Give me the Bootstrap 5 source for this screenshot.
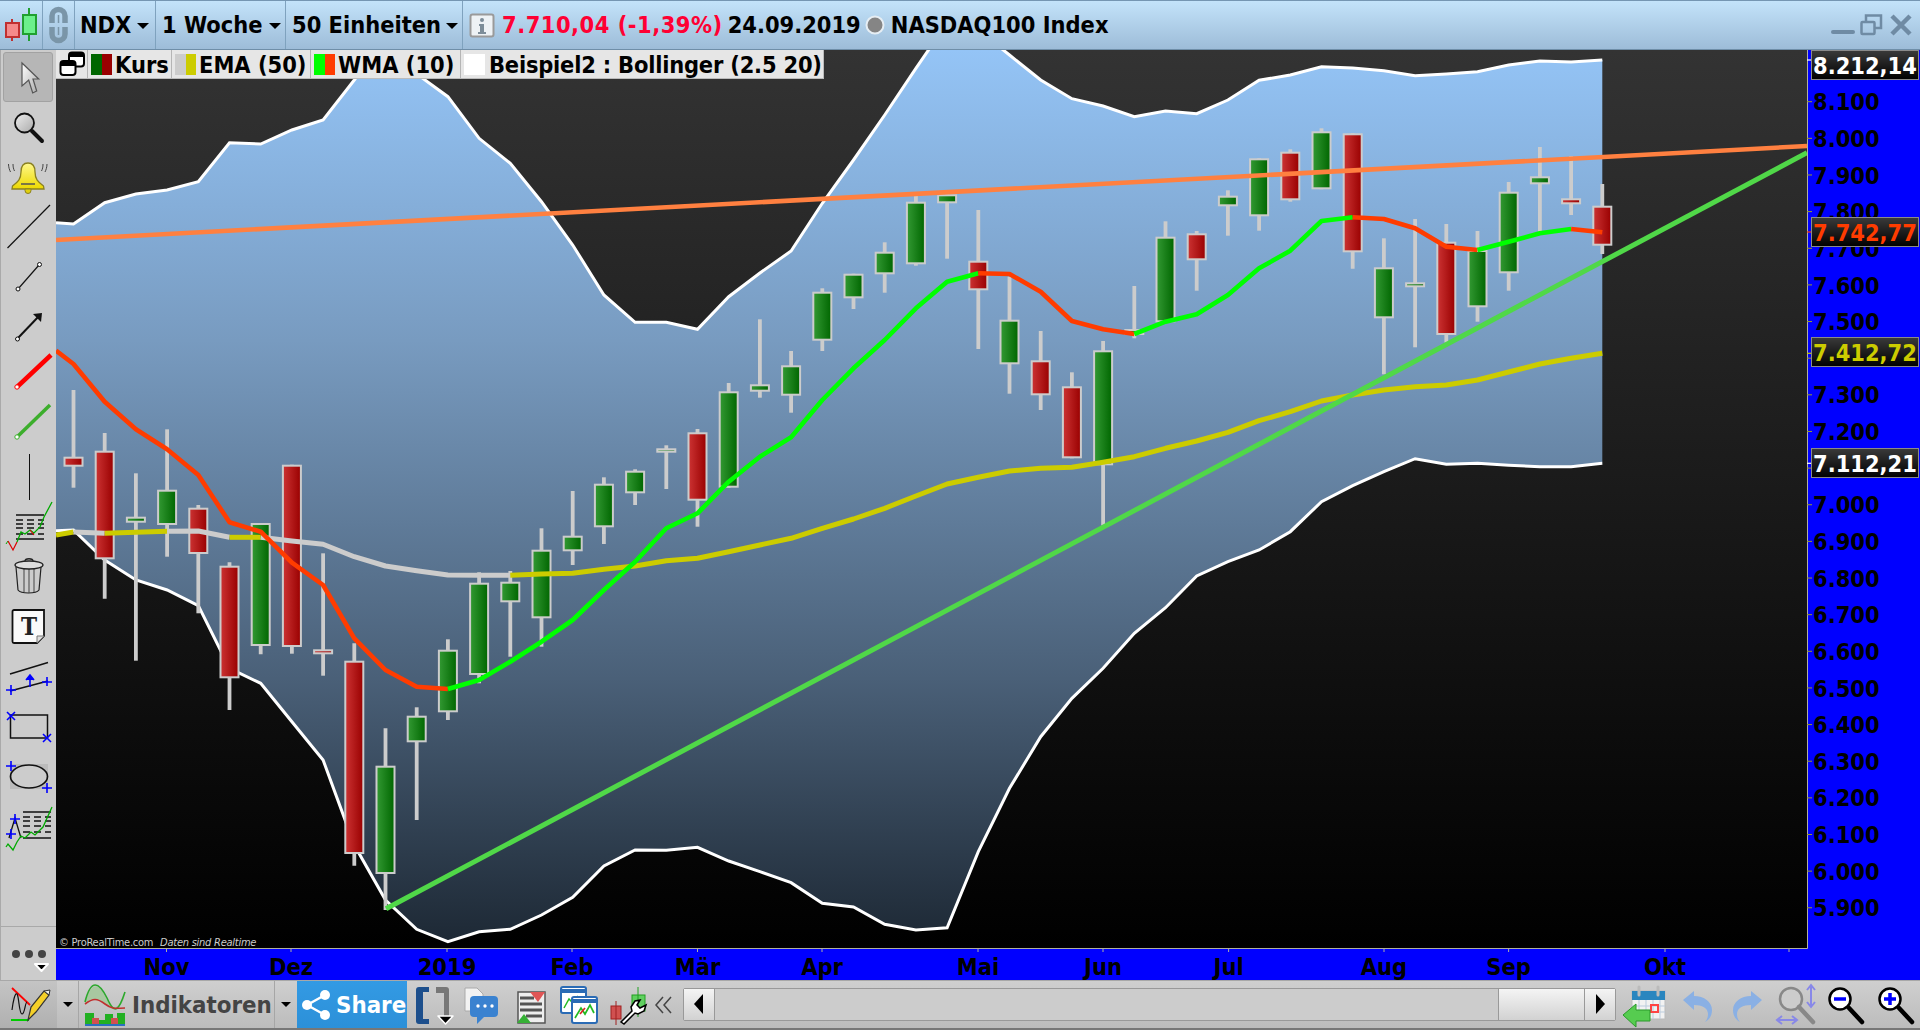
<!DOCTYPE html>
<html lang="de">
<head>
<meta charset="utf-8">
<title>NDX</title>
<link href="https://cdn.jsdelivr.net/npm/bootstrap@5.3.0/dist/css/bootstrap.min.css" rel="stylesheet">
<style>
html,body{height:100%;margin:0;overflow:hidden;background:#ccc}
body{font-family:"DejaVu Sans Condensed","DejaVu Sans",sans-serif;font-stretch:condensed;font-weight:700;font-size:23.4px;line-height:1;color:#000}
svg{display:block;overflow:visible}
.shell{width:1920px;height:1030px}
.topbar{height:50px;flex:none;background:linear-gradient(#c3e3fa,#9dbcd8);border-top:1px solid #7596b2;border-bottom:1px solid #6f8ea8}
.seg{height:100%;border-right:1px solid #7fa2be}
.seg.dropdown-toggle::after{border-top:.27em solid;border-right:.27em solid transparent;border-left:.27em solid transparent;border-bottom:0;margin-left:0}
.s-logo{width:43px}.s-chain{width:32px}
.s-ndx{width:81px;padding:2px 6px 0 5px}.s-wk{width:130px;padding:2px 4px 0 6px}.s-un{width:177px;padding:2px 4px 0 6px}
.quote{margin-left:6px}
.quote span{padding-top:2px}
.pricetxt{color:#f03;margin-left:7px;letter-spacing:.5px}
.datetxt{margin-left:5px}
.namefx{margin-left:6px}
.winbtns{margin-right:8px}
.middle{min-height:0}
.toolcol{width:56px;flex:none;background:#ccc;border-left:1px solid #aaa;padding-top:2px}
.tool{height:50px;width:55px;flex:none}
.tool.on{background:#b6b6b6;border:1px solid #a2a2a2;border-radius:3px;width:50px;margin-left:2px}
.morebox{margin-top:auto;height:54px;border-top:1px solid #a9a9a9}
.stage{min-width:0}
.legendbar{position:absolute;left:0;top:0;width:768px;height:29px;background:#e6e6e6;border-bottom:1px solid #bbb;border-right:1px solid #bbb}
.legcell{height:100%;padding:0 0 0 3px;border-right:1px solid #b5b5b5;gap:3px;flex:none}
.legcell:last-child{border-right:0;flex:1 1 auto}
.legtxt{padding-top:4px}
.l1{width:32px}.l2{width:84px}.l3{width:139px}.l4{width:150px}
.tight{letter-spacing:-.2px}
.swatch{width:21px;height:21px;flex:none;display:flex}
.swatch i{flex:1}
.bottombar{height:50px;flex:none;background:linear-gradient(#cfcfcf,#bcbcbc);border-top:1px solid #a8a8a8;border-bottom:2px solid #777;font-size:23.8px}
.pen{width:57px;background:linear-gradient(#c4c4c4,#b0b0b0);height:100%;flex:none}
.capbox{height:100%;flex:none;border-right:1px solid #a6a6a6}
.capbox.dropdown-toggle::after{border-top:.25em solid;border-right:.25em solid transparent;border-left:.25em solid transparent;border-bottom:0;margin:0}
.c1{width:22px}.c2{width:22px}
.indi{width:196px;height:100%;border-right:1px solid #a6a6a6;color:#444;padding-left:6px;gap:5px;flex:none}
.indi span,.sharebtn span{padding-top:2px}
.sharebtn{width:110px;height:100%;flex:none;background:linear-gradient(#339ae4,#2c90d8);color:#fff;padding-left:5px;gap:6px}
.ico{flex:none}
.track{height:33px;width:933px;flex:none;background:#ccc;border:1px solid #999;border-radius:2px;margin-top:-1px}
.sb{background:linear-gradient(#f4f4f4,#d2d2d2);height:100%;flex:none}
.sb-a{width:31px;border-right:1px solid #999}
.sb-b{width:31px;border-left:1px solid #999}
.sb-t{width:86px;border-left:1px solid #999}
.bleft{margin-left:7px}
.gapico{margin-left:6px}
.copytxt{font-weight:400;font-size:11px;letter-spacing:-.25px}
</style>
</head>
<body>
<div class="shell d-flex flex-column">
  <!-- top bar -->
  <div class="topbar d-flex align-items-center">
    <div class="seg s-logo d-flex align-items-center justify-content-center">
      <svg width="43" height="49" viewBox="0 1 43 49"><path d="M12 19v22" stroke="#c03030" stroke-width="2"/><path d="M29 8v33" stroke="#20a030" stroke-width="2"/><rect x="6" y="23" width="13" height="14" fill="#f58a8a" stroke="#c03030" stroke-width="2"/><rect x="23" y="15" width="13" height="19" fill="#6cf08c" stroke="#20a030" stroke-width="2"/></svg>
    </div>
    <div class="seg s-chain d-flex align-items-center justify-content-center">
      <svg width="32" height="49" viewBox="43 1 32 49"><g fill="none" stroke="#7a95a8"><path d="M52 23v-7a6.500 6.500 0 0 1 13 0v7" stroke-width="5.500"/><path d="M52 27v7a6.500 6.500 0 0 0 13 0v-7" stroke-width="5.500"/><path d="M58.500 15v8M58.500 27v8" stroke-width="1.500"/></g></svg>
    </div>
    <div class="seg s-ndx dropdown-toggle d-flex align-items-center justify-content-between">NDX</div>
    <div class="seg s-wk dropdown-toggle d-flex align-items-center justify-content-between">1 Woche</div>
    <div class="seg s-un dropdown-toggle d-flex align-items-center justify-content-between">50 Einheiten</div>
    <div class="quote d-flex align-items-center flex-grow-1">
      <svg class="ico" width="26" height="25" viewBox="0 0 26 25"><rect x="1.500" y="1.500" width="23" height="22" rx="2" fill="#eef2f5" stroke="#9a9a9a" stroke-width="2"/><circle cx="13" cy="7" r="2" fill="#7d8d99"/><path d="M10 11h5v8h2v2H9v-2h2v-6h-1z" fill="#7d8d99"/></svg>
      <span class="pricetxt">7.710,04 (-1,39%)</span>
      <span class="datetxt">24.09.2019</span>
      <svg class="ico ms-1" width="20" height="20" viewBox="0 0 20 20"><circle cx="10" cy="10" r="8.500" fill="#858585" stroke="#e6eef4" stroke-width="2"/></svg>
      <span class="namefx">NASDAQ100 Index</span>
    </div>
    <div class="winbtns">
      <svg width="80" height="30" viewBox="1832 10 80 30"><path d="M1833 32h20" stroke="#6f8ba4" stroke-width="4" stroke-linecap="round"/><g fill="none" stroke="#6f8ba4" stroke-width="2.500"><rect x="1861.500" y="22" width="13" height="12" rx="1"/><path d="M1866 21v-5.500h15v12.500h-6"/></g><path d="M1892 16l18 18M1910 16l-18 18" stroke="#6f8ba4" stroke-width="4.500"/></svg>
    </div>
  </div>

  <!-- middle -->
  <div class="middle d-flex flex-grow-1">
    <div class="toolcol d-flex flex-column">
      <div class="tool on"><svg width="50" height="48" viewBox="2 1 50 48"><defs><linearGradient id="wg" x1="0" y1="0" x2="1" y2="1"><stop offset="0" stop-color="#fff"/><stop offset="1" stop-color="#aaa"/></linearGradient></defs><path d="M20 11v23l6.700-6 4 13 4-2-3.700-12h5.700z" fill="url(#wg)" stroke="#555" stroke-width="1.200"/></svg></div>
      <div class="tool"><svg width="55" height="50"><defs><linearGradient id="lens" x1="0" y1="0" x2="1" y2="1"><stop offset="0" stop-color="#eee"/><stop offset="1" stop-color="#aaa"/></linearGradient></defs><circle cx="23.500" cy="21" r="9.500" fill="url(#lens)" stroke="#111" stroke-width="1.800"/><path d="M31 29l10 10" stroke="#111" stroke-width="4" stroke-linecap="round"/></svg></div>
      <div class="tool"><svg width="55" height="50"><defs><linearGradient id="bel" x1="0" y1="0" x2="0" y2="1"><stop offset="0" stop-color="#fff88a"/><stop offset="1" stop-color="#ecd800"/></linearGradient></defs><path d="M27 11c-5 0-7 4-7 9 0 7-3 10-8.500 14l-.5 3h32l-.5-3C37 30 34 27 34 20c0-5-2-9-7-9z" fill="url(#bel)" stroke="#8a8020" stroke-width="1.300"/><path d="M20 32h14" stroke="#555" stroke-width="1.500"/><path d="M24 37h6v1.500a3 3 0 0 1-6 0z" fill="#e0d010" stroke="#8a8020"/><path d="M7.500 12c0 3 1 6 2 8M12 12c0 3 .5 5 1.500 7M46 12c0 3-1 6-2 8M42 12c0 3-.5 5-1.500 7" stroke="#444" fill="none"/></svg></div>
      <div class="tool"><svg width="55" height="50"><path d="M6.500 46L49 3" stroke="#111" stroke-width="1.200"/></svg></div>
      <div class="tool"><svg width="55" height="50"><path d="M17 37L38 13" stroke="#111" stroke-width="1.200"/><circle cx="17" cy="37" r="2" fill="#fff" stroke="#111"/><circle cx="38.500" cy="12.500" r="2" fill="#fff" stroke="#111"/></svg></div>
      <div class="tool"><svg width="55" height="50"><path d="M17 36L39 13" stroke="#111" stroke-width="2"/><path d="M32 12l9-1-1 9z" fill="#111"/><circle cx="16.500" cy="37" r="2" fill="#fff" stroke="#111"/></svg></div>
      <div class="tool"><svg width="55" height="50"><path d="M16 35L50 3" stroke="#f00" stroke-width="4.500"/><circle cx="16" cy="35" r="2.200" fill="#fff" stroke="#f00"/></svg></div>
      <div class="tool"><svg width="55" height="50"><path d="M16 35L49 3" stroke="#3cae2c" stroke-width="3.500"/><circle cx="16" cy="35" r="2.200" fill="#fff" stroke="#3cae2c"/></svg></div>
      <div class="tool"><svg width="55" height="50"><path d="M28.500 2v46" stroke="#111" stroke-width="1"/></svg></div>
      <div class="tool"><svg width="55" height="50"><g stroke="#111"><path d="M15 13h28M15 37h28" stroke-width="1.300"/><path d="M15 18h28M15 22h28M15 26h28M15 32h28" stroke-width="1.700" stroke-dasharray="7 4"/></g><path d="M5 42l2-3" stroke="#0a0" fill="none"/><path d="M7 39l5 9 4-8" stroke="#d00" stroke-width="1.200" fill="none"/><path d="M16 40l4-10 4 2 5-4 4 3 6-6 4-10 8-15" stroke="#0a0" stroke-width="1.300" fill="none"/><path d="M29 28l4 5" stroke="#d00" stroke-width="1.200"/></svg></div>
      <div class="tool"><svg width="55" height="50"><path d="M15 15l2 23c3 4 18 4 21 0l2-23" fill="#ccc" stroke="#222" stroke-width="1.200"/><path d="M23 17v23M28 17v24M33 17v23" stroke="#444"/><ellipse cx="28" cy="13" rx="14" ry="4" fill="#ddd" stroke="#222" stroke-width="1.300"/><path d="M24 9c0-3 8-3 8 0" fill="none" stroke="#222" stroke-width="1.300"/></svg></div>
      <div class="tool"><svg width="55" height="50"><path d="M13 8h30v26l-7 7H13a1.500 1.500 0 0 1-1.500-1.500V9.500A1.500 1.500 0 0 1 13 8z" fill="#fafafa" stroke="#111" stroke-width="1.800"/><path d="M43 34h-7v7" fill="#ddd" stroke="#777"/><text x="28" y="33" text-anchor="middle" font-family="'DejaVu Serif',serif" font-weight="700" font-size="24" fill="#222">T</text></svg></div>
      <div class="tool"><svg width="55" height="50"><path d="M9 22l38-11.500M9 39l38-10" stroke="#111" stroke-width="1.500"/><path d="M29 35V24M25 28l4-5 4 5" stroke="#00f" stroke-width="1.600" fill="#00f"/><path d="M10 33v10M5 38h10M46 25v9M41 30h10" stroke="#00f" stroke-width="1.600"/></svg></div>
      <div class="tool"><svg width="55" height="50"><rect x="9.500" y="13" width="37" height="23" fill="none" stroke="#111" stroke-width="1.500"/><path d="M6 10l8 8M14 10l-8 8M42 32l8 8M50 32l-8 8" stroke="#00f" stroke-width="1.600"/></svg></div>
      <div class="tool"><svg width="55" height="50"><rect x="9" y="12" width="38" height="25" fill="#bbb"/><ellipse cx="28" cy="24.500" rx="18.500" ry="11.500" fill="#ccc" stroke="#111" stroke-width="1.700"/><path d="M10 9v10M5 14h10M46 31v10M41 36h10" stroke="#00f" stroke-width="1.600"/></svg></div>
      <div class="tool"><svg width="55" height="50"><path d="M22 10h28M22 36h28" stroke="#111" stroke-width="1.300"/><path d="M22 15h28M22 19h28M22 24h28M22 30h28" stroke="#111" stroke-width="1.700" stroke-dasharray="7 4"/><path d="M8 36l6-20 6 20" fill="none" stroke="#111" stroke-width="1.300"/><path d="M14 12v10M9 17h10M10 27v10M5 32h10" stroke="#00f" stroke-width="1.600"/><path d="M5 45l2-3 5 6 4-8 4-6 4 2 6-6 4 3 8-8 9-20" stroke="#0a0" stroke-width="1.300" fill="none"/></svg></div>
      <div class="morebox d-flex flex-column align-items-center position-relative">
        <svg width="55" height="54"><circle cx="15" cy="27" r="4" fill="#444"/><circle cx="28" cy="27" r="4" fill="#444"/><circle cx="41" cy="27" r="4" fill="#444"/><path d="M34 37h13l-6.500 7z" fill="#000" stroke="#fff" stroke-width="2" stroke-linejoin="round"/></svg>
      </div>
    </div>
    <div class="stage flex-grow-1 position-relative">
      <svg id="chart" width="1864" height="930" viewBox="56 50 1864 930" style="overflow:hidden">
        <defs>
          <linearGradient id="bg" x1="0" y1="0" x2="0" y2="1"><stop offset="0" stop-color="#333"/><stop offset="1" stop-color="#000"/></linearGradient>
          <linearGradient id="band" gradientUnits="userSpaceOnUse" x1="0" y1="50" x2="0" y2="948"><stop offset="0" stop-color="#94c4f6"/><stop offset=".323" stop-color="#789bc0"/><stop offset=".7" stop-color="#4a6078"/><stop offset="1" stop-color="#1c2733"/></linearGradient>
          <linearGradient id="rb"><stop offset="0" stop-color="#cc3333"/><stop offset="1" stop-color="#990000"/></linearGradient>
          <linearGradient id="gb"><stop offset="0" stop-color="#339933"/><stop offset="1" stop-color="#006600"/></linearGradient>
          <linearGradient id="tag" x1="0" y1="0" x2="0" y2="1"><stop offset="0" stop-color="#3a3a3a"/><stop offset="1" stop-color="#000"/></linearGradient>
          <clipPath id="plot"><rect x="56" y="50" width="1751" height="898"/></clipPath>
        </defs>
        <rect x="56" y="50" width="1864" height="930" fill="#00f"/>
        <rect x="56" y="50" width="1751" height="898" fill="url(#bg)"/>
        <g id="plotg" clip-path="url(#plot)"></g>
        <path d="M1807.500 50V948.500H56" fill="none" stroke="#b0b0a0" stroke-width="1"/>
        <g id="ticks"></g>
        <g id="labels" font-family="'DejaVu Sans Condensed','DejaVu Sans',sans-serif" font-weight="700" font-size="23.4" fill="#000">
          <text x="1813" y="110">8.100</text><text x="1813" y="147">8.000</text><text x="1813" y="184">7.900</text><text x="1813" y="220">7.800</text><text x="1813" y="257">7.700</text><text x="1813" y="294">7.600</text><text x="1813" y="330">7.500</text>
          <text x="1813" y="403">7.300</text><text x="1813" y="440">7.200</text><text x="1813" y="513">7.000</text><text x="1813" y="550">6.900</text><text x="1813" y="587">6.800</text><text x="1813" y="623">6.700</text><text x="1813" y="660">6.600</text><text x="1813" y="697">6.500</text><text x="1813" y="733">6.400</text><text x="1813" y="770">6.300</text><text x="1813" y="806">6.200</text><text x="1813" y="843">6.100</text><text x="1813" y="880">6.000</text><text x="1813" y="916">5.900</text>
          <g text-anchor="middle"><text x="166.500" y="975">Nov</text><text x="291" y="975">Dez</text><text x="447" y="975">2019</text><text x="572" y="975">Feb</text><text x="697.500" y="975">Mär</text><text x="822" y="975">Apr</text><text x="978" y="975">Mai</text><text x="1103" y="975">Jun</text><text x="1228.600" y="975">Jul</text><text x="1384" y="975">Aug</text><text x="1508.600" y="975">Sep</text><text x="1665" y="975">Okt</text></g>
        </g>
        <g font-family="'DejaVu Sans Condensed','DejaVu Sans',sans-serif" font-weight="700" font-size="23.4">
          <rect x="1811.500" y="50.500" width="107" height="29" fill="url(#tag)" stroke="#8a8a8a"/><text x="1813" y="73.500" fill="#fff">8.212,14</text>
          <rect x="1811.500" y="217.500" width="107" height="29" fill="url(#tag)" stroke="#8a8a8a"/><text x="1813" y="240.500" fill="#ff3c00">7.742,77</text>
          <rect x="1811.500" y="337.500" width="107" height="29" fill="url(#tag)" stroke="#8a8a8a"/><text x="1813" y="360.500" fill="#cc0">7.412,72</text>
          <rect x="1811.500" y="448.500" width="107" height="29" fill="url(#tag)" stroke="#8a8a8a"/><text x="1813" y="471.500" fill="#fff">7.112,21</text>
        </g>
        <text class="copytxt" x="59" y="946" fill="#ccc" font-family="'DejaVu Sans Condensed','DejaVu Sans',sans-serif">© ProRealTime.com <tspan dx="4" font-style="italic">Daten sind Realtime</tspan></text>
      </svg>
      <div class="legendbar d-flex align-items-center">
        <div class="legcell l1 d-flex align-items-center"><svg width="26" height="26" viewBox="0 0 26 26"><rect x="10" y="1.500" width="15" height="14" rx="3" fill="#fff" stroke="#000" stroke-width="2"/><path d="M10 6h15v-1.500a3 3 0 0 0-3-3h-9a3 3 0 0 0-3 3z" fill="#000"/><rect x="1.500" y="10" width="15" height="14" rx="3" fill="#fff" stroke="#000" stroke-width="2"/><path d="M1.500 15h15v-2a3 3 0 0 0-3-3h-9a3 3 0 0 0-3 3z" fill="#000"/></svg></div>
        <div class="legcell l2 d-flex align-items-center"><span class="swatch"><i style="background:#060"></i><i style="background:#900"></i></span><span class="legtxt">Kurs</span></div>
        <div class="legcell l3 d-flex align-items-center"><span class="swatch"><i style="background:#ccc"></i><i style="background:#cc0"></i></span><span class="legtxt">EMA (50)</span></div>
        <div class="legcell l4 d-flex align-items-center"><span class="swatch"><i style="background:#0f0"></i><i style="background:#ff3c00"></i></span><span class="legtxt">WMA (10)</span></div>
        <div class="legcell d-flex align-items-center gap-1"><span class="swatch"><i style="background:#fff"></i></span><span class="legtxt tight">Beispiel2 : Bollinger (2.5 20)</span></div>
      </div>
    </div>
  </div>

  <!-- bottom bar -->
  <div class="bottombar d-flex align-items-center">
    <div class="pen d-flex align-items-center justify-content-center">
      <svg width="57" height="48" viewBox="0 1 57 48"><path d="M12 8l18 17" stroke="#f00" stroke-width="1.800"/><path d="M12 30c1-8 3-18 5-16s2 20 5 20 3-12 5-12" fill="none" stroke="#111" stroke-width="1.200"/><path d="M11 40h18" stroke="#0c0" stroke-width="2"/><path d="M28 40l3-13 13-16 5 4-13 17z" fill="#f5d029" stroke="#333" stroke-width="1.200"/><path d="M44 11l5 4 1-5z" fill="#eee" stroke="#333"/></svg>
    </div>
    <div class="capbox c1 dropdown-toggle d-flex align-items-center justify-content-center"></div>
    <div class="indi d-flex align-items-center">
      <svg class="ico" width="42" height="44" viewBox="86 3 42 44"><path d="M86 24c6-24 14-22 22-4 6 10 12 10 18-6-3 15-11 18-18 12s-14-10-22-2z" fill="#a8c8a0"/><path d="M86 22c6-24 14-20 22-4 8 18 12 12 18-6" fill="none" stroke="#2ca82c" stroke-width="1.600"/><path d="M86 24c8-6 12-6 20 0s12 4 20 4" fill="none" stroke="#c03030" stroke-width="1.600"/><path d="M86 33h9v11h-9zM106 34h8v10h-8zM118 33h8v11h-8zM95 40h11v4H95z" fill="#22b022"/><path d="M93 38h7v6h-7zM112 38h7v6h-7z" fill="#d05050"/><path d="M86 44h40v2H86z" fill="#2a70c0"/></svg>
      <span>Indikatoren</span>
    </div>
    <div class="capbox c2 dropdown-toggle d-flex align-items-center justify-content-center border-0"></div>
    <div class="sharebtn d-flex align-items-center">
      <svg class="ico" width="28" height="30" viewBox="0 0 28 30"><path d="M5 15L23 5M5 15l18 10" stroke="#fff" stroke-width="2.500"/><circle cx="5" cy="15" r="5" fill="#fff"/><circle cx="23" cy="5" r="5" fill="#fff"/><circle cx="23" cy="25" r="5" fill="#fff"/></svg>
      <span>Share</span>
    </div>
    <svg class="ico gapico" width="236" height="48" viewBox="413 981 236 48">
      <path d="M429 987h-10a3 3 0 0 0-3 3v31a3 3 0 0 0 3 3h10v-5h-6v-27h6z" fill="#1d4f8c"/><path d="M436 987h10a3 3 0 0 1 3 3v31h-5v-28h-8z" fill="#777"/><path d="M438 1016h15l-7.500 8z" fill="#000" stroke="#fff" stroke-width="1.500" stroke-linejoin="round"/>
      <path d="M465 988h12l6 6v17h-18z" fill="#f2f2f2" stroke="#aaa"/><rect x="470" y="996" width="28" height="21" rx="4" fill="#3a82d0"/><path d="M477 1016v8l8-8z" fill="#3a82d0"/><circle cx="478" cy="1006" r="1.700" fill="#fff"/><circle cx="485" cy="1006" r="1.700" fill="#fff"/><circle cx="492" cy="1006" r="1.700" fill="#fff"/>
      <rect x="518" y="992" width="27" height="31" fill="#eee" stroke="#555" stroke-width="1.500"/><path d="M520 998h14M520 1004h22M520 1010h22M526 1016h16" stroke="#555" stroke-width="3"/><path d="M530 992h15l-7 10z" fill="#e05555"/><path d="M517 1023l7-9 7 9z" fill="#35b035"/>
      <rect x="561" y="987" width="25" height="26" rx="2" fill="#fff" stroke="#2a6bb5" stroke-width="2"/><path d="M561 989h25v4h-25z" fill="#2a6bb5"/><path d="M564 1008l5-9 4 4 5-7" stroke="#2b2" fill="none" stroke-width="1.500"/><rect x="572" y="997" width="25" height="26" rx="2" fill="#fff" stroke="#2a6bb5" stroke-width="2"/><path d="M572 999h25v4h-25z" fill="#2a6bb5"/><path d="M575 1018l6-10 4 6 5-9 4 8" stroke="#2b2" fill="none" stroke-width="1.700"/><path d="M580 1014l5-6" stroke="#d22" stroke-width="1.700"/>
      <rect x="611" y="1006" width="10" height="13" fill="#d05050" stroke="#a02020"/><path d="M616 1001v24" stroke="#a02020"/><rect x="632" y="995" width="13" height="16" fill="#60d060" stroke="#20a020"/><path d="M638 987v30" stroke="#20a020"/><path d="M621 1022l11-11-1-4 4-6 5-1-3 5 3 3 6-3-2 6-6 3-3-1-11 11z" fill="#fff" stroke="#000" stroke-width="1.500"/>
    </svg>
    <svg class="ico" width="34" height="24" viewBox="650 995 34 24"><path d="M664 999l-7 8 7 8M672 999l-7 8 7 8" fill="none" stroke="#444" stroke-width="1.500"/></svg>
    <div class="track d-flex justify-content-between">
      <div class="sb sb-a d-flex align-items-center justify-content-center"><svg width="10" height="20"><path d="M9 0v20L0 10z" fill="#000"/></svg></div>
      <div class="d-flex">
        <div class="sb sb-t"></div>
        <div class="sb sb-b d-flex align-items-center justify-content-center"><svg width="10" height="20"><path d="M1 0v20l9-10z" fill="#000"/></svg></div>
      </div>
    </div>
    <svg class="ico bleft" width="291" height="48" viewBox="1622 981 291 48">
      <rect x="1631" y="991" width="33" height="28" fill="#f2f2f2" stroke="#bbb"/><rect x="1631" y="991" width="33" height="9" fill="#2a86bf"/><path d="M1638 987v8M1657 987v8" stroke="#bbb" stroke-width="3" stroke-linecap="round"/><path d="M1638 1000v19M1645 1000v19M1652 1000v19M1659 1000v19M1631 1006h33M1631 1012h33" stroke="#bcd" stroke-width="1"/><rect x="1650" y="1005" width="7" height="7" fill="none" stroke="#f44" stroke-width="2"/><path d="M1622 1015l13-11v6h14v11h-14v6z" fill="#56cc50" stroke="#2a9a2a"/>
      <path d="M1682 1000l11-9v5c10 0 18 6 18 14 0 6-3 10-7 12 2-2 3-5 3-8 0-6-6-9-14-9v5z" fill="#8ab0e4"/>
      <path d="M1761 1000l-11-9v5c-10 0-18 6-18 14 0 6 3 10 7 12-2-2-3-5-3-8 0-6 6-9 14-9v5z" fill="#8ab0e4"/>
      <circle cx="1790" cy="999" r="11" fill="#ccc" stroke="#888" stroke-width="2.500"/><path d="M1798 1007l14 15" stroke="#888" stroke-width="4.500" stroke-linecap="round"/><path d="M1810 986v20M1806 990l4-5 4 5M1806 1002l4 5 4-5M1777 1020h18M1781 1016l-5 4 5 4M1791 1016l5 4-5 4" stroke="#8888e8" stroke-width="2" fill="none"/>
      <circle cx="1839" cy="999" r="10.500" fill="#fff" stroke="#000" stroke-width="2.500"/><path d="M1833 999h12" stroke="#00f" stroke-width="3.500"/><path d="M1848 1008l13 14" stroke="#000" stroke-width="4.500" stroke-linecap="round"/>
      <circle cx="1889" cy="999" r="10.500" fill="#fff" stroke="#000" stroke-width="2.500"/><path d="M1883 999h12M1889 993v12" stroke="#00f" stroke-width="3.500"/><path d="M1898 1008l13 14" stroke="#000" stroke-width="4.500" stroke-linecap="round"/>
    </svg>
  </div>
</div>
<script src="https://cdn.jsdelivr.net/npm/bootstrap@5.3.0/dist/js/bootstrap.bundle.min.js"></script>
<script>
(function(){
var NS='http://www.w3.org/2000/svg';
function X(i){return i<0?56:73.5+31.2*i;}
var U=[222.7,224,202.7,194,190,181.7,142.7,144,130,120,80,38,74,96.7,138.3,163.3,201.7,245,295,322.3,322.3,329.3,296.7,273,251,203.3,160,115,68.3,23,30,55,80,98.7,106,116.7,111,113.7,100,80.3,75,66.7,68,70.7,75.7,74,71.7,65,61,62,60];
var L=[530.7,530,560,580,590,605.7,668.3,683.3,721.7,760,845,900,929.3,941.7,931.7,929.3,915,897.3,866,850,850.3,847.3,861,871.7,882.7,903.3,907,924.3,930,927.7,851.7,788.3,736.7,698.3,668.3,633.3,607.7,576,561.7,550,531.7,501.7,485.7,471.7,458.7,464.3,463.3,465.3,466.7,466.7,463.3];
var W=[350.7,364,401.7,429.3,449.3,475,522.3,531.7,562.7,585,638.3,670,686.7,689,680,661.7,641.7,620,590,561.7,528.3,513.3,481.7,456.7,437.3,400,368.3,340,308.3,281.7,273.3,274,291.7,321,329.3,334,321.7,314.3,295,268.3,250.7,221,217.3,219,228.3,246.7,250,241.7,233.3,229,232.3];
var E=[535,532,533.3,532.3,531.3,531,537.3,537.3,541,544.3,556.7,566,570.7,575,575.3,575.3,574,573.3,569.3,566,560.7,558.3,551.7,545,538.3,528.3,519,508.3,496,484,477.3,471,468.3,467.3,462.3,456.7,448.3,441,432.3,420.7,411.7,401,395,390,386.7,385,380,372,364,358.3,353.3];
var C=[['r',390,456.7,466.7,487.7],['r',433,450.7,559.3,598.7],['g',473.3,516.7,522.7,660.7],['g',429.3,489.7,525,556.7],['r',505,507.7,554,613.3],['r',562.3,565.7,678.3,710],['g',523,523,646,654.3],['r',464.7,464.7,647,653.7],['r',553.3,649.3,654.3,675.7],['r',643.3,660.7,854,865.7],['g',728.3,765.7,874,910],['g',707.3,715.7,742.3,820],['g',639.3,649.7,712.3,720],['g',572.3,582.7,675,683.3],['g',571,581.7,602.3,656.7],['g',528.3,549.7,618.3,646.7],['g',491,535.7,551.3,565],['g',477.3,483.7,527.3,544],['g',469.3,470.7,493.3,505],['g',445.3,448.3,452.7,489],['r',429,432.3,500.7,526.7],['g',383,391.3,487.7,487.7],['g',319.3,384.3,391.7,397.7],['g',351,365.3,395.7,412.7],['g',288.3,291.7,340.7,351],['g',273.7,273.7,298.3,309],['g',242.3,251.7,274.3,292.7],['g',192.7,201.7,264.3,265.7],['g',194.3,194.3,203.3,258.7],['r',210,260.7,290.3,349],['g',276.7,319.7,364.3,393.7],['r',331,360.3,395.3,410],['r',372.3,386.3,458.3,458.3],['g',341,350.3,465.3,525.7],['g',286,329,335,338.3],['g',221.3,236.7,322.3,322.3],['r',231,233.3,260.3,290.7],['g',190.3,195.7,206.3,235.7],['g',158.3,158.3,216.3,230.7],['r',149.3,151.7,200.3,201.7],['g',128.3,131.3,189.3,189.3],['r',133.3,133.3,252.3,268.7],['g',238.3,267.3,318.3,374.3],['g',219,282.3,287.3,347.3],['r',224,241.7,335,342.7],['g',231,250,307.3,321.7],['g',182,191.7,273.3,290.7],['g',147,176.3,184.3,231.7],['r',156,198.3,204.3,215],['r',184,205.7,245.7,254]];
var g=document.getElementById('plotg');
function el(n,a){var e=document.createElementNS(NS,n);for(var k in a)e.setAttribute(k,a[k]);g.appendChild(e);return e;}
function pts(a,from,to){var s=[];for(var i=from;i<=to;i++)s.push(X(i-1)+','+a[i]);return s;}
var up=pts(U,0,50),lo=pts(L,0,50);
el('polygon',{points:up.concat(lo.slice().reverse()).join(' '),fill:'url(#band)'});
el('polyline',{points:up.join(' '),fill:'none',stroke:'#fff','stroke-width':3});
el('polyline',{points:lo.join(' '),fill:'none',stroke:'#fff','stroke-width':3});
C.forEach(function(c,i){var x=X(i);
  el('line',{x1:x,x2:x,y1:c[1],y2:c[4],stroke:'#ccc','stroke-width':3.8});
  var h=Math.max(c[3]-c[2]-2,1);
  el('rect',{x:x-9,y:c[2]+1,width:18,height:h,fill:'url(#'+c[0]+'b)',stroke:'#ccc','stroke-width':2});
});
function seg(a,ranges,w){ranges.forEach(function(r){el('polyline',{points:pts(a,r[0],r[1]).join(' '),fill:'none',stroke:r[2],'stroke-width':w,'stroke-linejoin':'round'});});}
var Y='#cccc00',G='#cccccc';
seg(E,[[0,1,Y],[1,2,G],[2,4,Y],[4,6,G],[6,7,Y],[7,15,G],[15,50,Y]],5);
var R='#ff3c00',N='#00ff00';
seg(W,[[0,13,R],[13,30,N],[30,35,R],[35,42,N],[42,46,R],[46,49,N],[49,50,R]],4.6);
el('line',{x1:386,y1:908.7,x2:1807,y2:152.7,stroke:'#50d848','stroke-width':5});
el('line',{x1:56,y1:240,x2:1807,y2:146,stroke:'#ff8040','stroke-width':4.6});
var t=document.getElementById('ticks');g=t;
for(var p=0;p<=22;p++){var y=101.7+p*36.64;el('line',{x1:1807,x2:1812,y1:y,y2:y,stroke:'#9a9a30','stroke-width':1});}
[[60,'#fff'],[232,'#ff3c00'],[353.3,'#cc0'],[463.3,'#fff']].forEach(function(a){el('line',{x1:1807,x2:1812,y1:a[0],y2:a[0],stroke:a[1],'stroke-width':1.2});});
[166.5,291,447,572,697.5,822,978,1103,1228.6,1384,1508.6,1665,1789].forEach(function(x){el('line',{x1:x,x2:x,y1:949,y2:952,stroke:'#b0b0a0','stroke-width':1});});
})();
</script>
</body>
</html>
